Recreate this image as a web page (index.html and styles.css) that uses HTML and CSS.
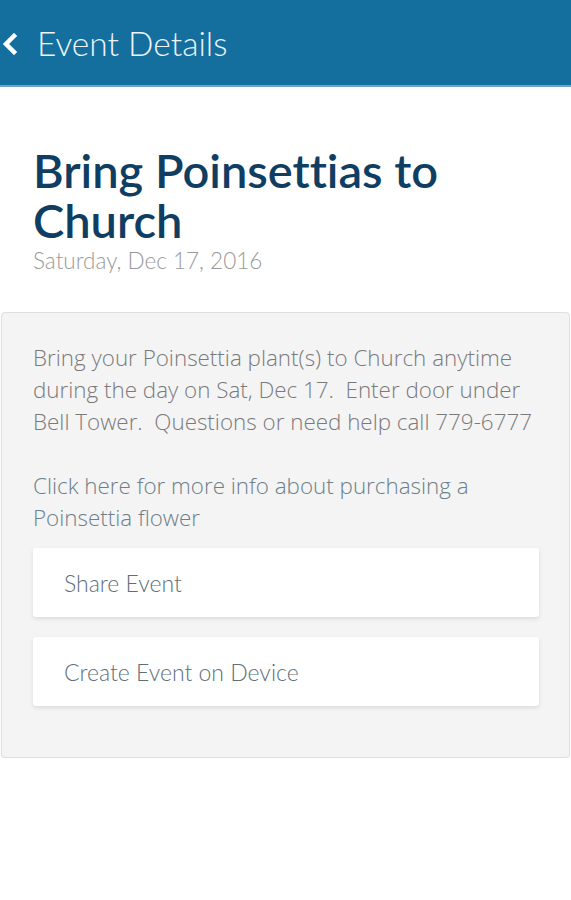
FILE: index.html
```html
<!DOCTYPE html>
<html lang="en">

<head>
  <meta charset="UTF-8">
  <meta name="viewport" content="width=device-width, initial-scale=1.0">
  <title>Event Details</title>
  <link rel="stylesheet" href="styles.css">
</head>

<body>

  <header class="top-bar">
    <a class="back-link" href="#">
      <svg class="back-icon" width="18" height="22" viewBox="0 0 18 22">
        <path d="M14 3 L6 11 L14 19" fill="none" stroke="#fff" stroke-width="4.5" stroke-linecap="square" />
      </svg>
      <span>Event Details</span>
    </a>
  </header>

  <div class="event-head">
    <h1>Bring Poinsettias to Church</h1>
    <p class="event-date">Saturday, Dec 17, 2016</p>
  </div>

  <div class="event-panel">
    <p>Bring your Poinsettia plant(s) to Church anytime during the day on Sat, Dec 17.&nbsp; Enter door under Bell Tower.&nbsp; Questions or need help call 779-6777</p>
    <p><a class="info-link" href="#">Click here for more info about purchasing a Poinsettia flower</a></p>

    <div class="actions">
      <button class="action-button">Share Event</button>
      <button class="action-button">Create Event on Device</button>
    </div>
  </div>

</body>

</html>
```

FILE: styles.css
```css
body {
  font-family: 'Lato', 'Open Sans', sans-serif;
  font-variant-ligatures: none;
  margin: 0;
  padding: 0;
  background-color: #fff;
  color: #777;
}

.top-bar {
  background-color: #146f9e;
  height: 85px;
  border-bottom: 2px solid #6fa4c4;
  display: flex;
  align-items: center;
}

.back-link {
  display: flex;
  align-items: center;
  color: #eef4f8;
  text-decoration: none;
  font-size: 33.5px;
  font-weight: 300;
  padding-left: 0;
}

.back-icon {
  margin-right: 19px;
  margin-top: 2px;
}

.event-head {
  padding: 58px 33px 0;
}

.event-head h1 {
  margin: 0;
  font-size: 47px;
  font-weight: 600;
  line-height: 50px;
  color: #103e63;
}

.event-date {
  margin: 2px 0 0;
  font-size: 22.5px;
  font-weight: 300;
  color: #9a9a9a;
}

.event-panel {
  margin: 38px 1px 0;
  padding: 29px 30px 51px 31px;
  background-color: #f4f4f5;
  border: 1px solid #e0e0e0;
  border-radius: 4px;
  box-shadow: 0 1px 2px rgba(0, 0, 0, 0.06);
}

.event-panel p {
  margin: 0 0 32px;
  font-family: 'Open Sans', sans-serif;
  font-size: 22.4px;
  font-weight: 300;
  line-height: 32px;
  color: #7a7a7a;
}

.info-link {
  color: #6d7f88;
  text-decoration: none;
}

.event-panel p:last-of-type {
  margin-bottom: 14px;
}

.actions {
  display: flex;
  flex-direction: column;
  gap: 20px;
}

.action-button {
  background-color: #fff;
  border: none;
  border-radius: 3px;
  box-shadow: 0 2px 4px rgba(0, 0, 0, 0.1);
  height: 69px;
  padding: 0 31px;
  text-align: left;
  font-family: inherit;
  font-variant-ligatures: none;
  font-size: 23px;
  font-weight: 300;
  color: #5e6f77;
  cursor: pointer;
}
```
